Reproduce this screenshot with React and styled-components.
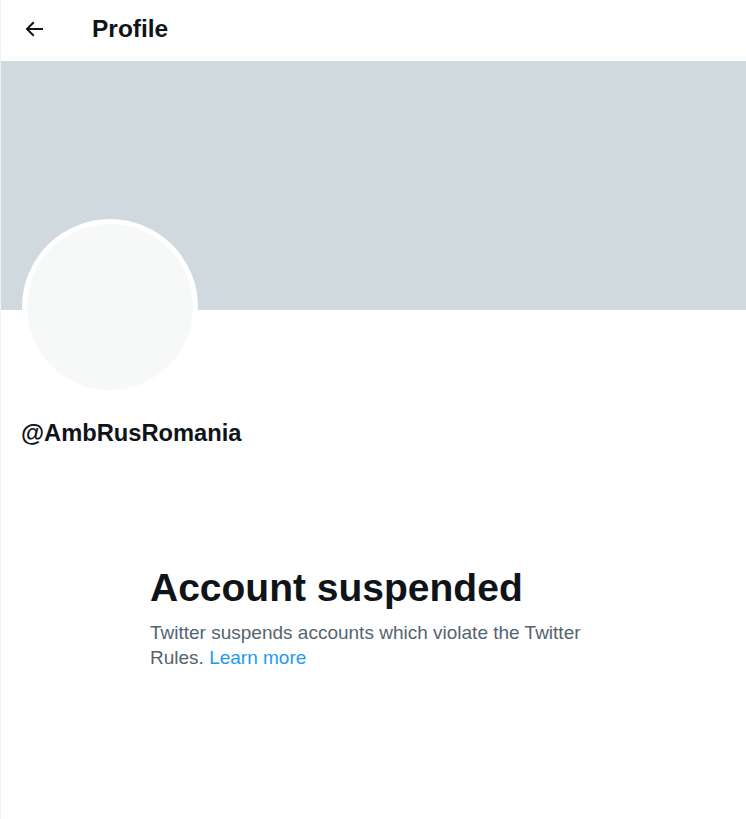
import React from "react";
import styled, { createGlobalStyle } from "styled-components";

const GlobalStyle = createGlobalStyle`
  html, body {
    margin: 0;
    padding: 0;
    background: #ffffff;
  }
  body {
    font-family: "Liberation Sans", Arial, sans-serif;
    color: #0f1419;
  }
  * { box-sizing: border-box; }
`;

const Page = styled.div`
  width: 746px;
  min-height: 100vh;
  border-left: 1px solid #eff3f4;
  display: flex;
  flex-direction: column;
`;

const Header = styled.header`
  height: 61px;
  display: flex;
  align-items: center;
  padding: 0 0 4px 21px;
  gap: 46px;
`;

const BackButton = styled.button`
  width: 24px;
  height: 24px;
  padding: 0;
  border: none;
  background: transparent;
  display: flex;
  align-items: center;
  justify-content: center;
  color: #0f1419;
  cursor: pointer;
`;

const Title = styled.h2`
  margin: 0;
  font-size: 24.5px;
  line-height: 28px;
  font-weight: 700;
  color: #0f1419;
`;

const Banner = styled.div`
  height: 249px;
  background: #cfd9de;
`;

const ProfileSection = styled.section`
  padding: 0 21px;
  display: flex;
  flex-direction: column;
  align-items: flex-start;
`;

const Avatar = styled.div`
  width: 176px;
  height: 176px;
  margin-top: -91px;
  border-radius: 50%;
  border: 5px solid #ffffff;
  background: #f7f9f9;
`;

const Handle = styled.div`
  margin-top: 24px;
  margin-left: -1px;
  font-size: 23.7px;
  line-height: 29px;
  font-weight: 700;
  color: #0f1419;
`;

const Suspended = styled.div`
  width: 447px;
  margin: 117px auto 0;
  display: flex;
  flex-direction: column;
  gap: 9px;
`;

const Heading = styled.h1`
  margin: 0;
  font-size: 39px;
  line-height: 46px;
  font-weight: 700;
  color: #0f1419;
`;

const Message = styled.p`
  margin: 0;
  font-size: 19px;
  line-height: 25px;
  color: #536471;
`;

const Link = styled.a`
  color: #1d9bf0;
  text-decoration: none;
`;

const ArrowIcon = () => (
  <svg viewBox="0 0 24 24" width="24" height="24" aria-hidden="true">
    <path
      fill="currentColor"
      d="M7.414 13l5.043 5.04-1.414 1.42L3.586 12l7.457-7.46 1.414 1.42L7.414 11H21v2H7.414z"
    />
  </svg>
);

export default function App() {
  return (
    <>
      <GlobalStyle />
      <Page>
        <Header>
          <BackButton aria-label="Back">
            <ArrowIcon />
          </BackButton>
          <Title>Profile</Title>
        </Header>
        <Banner />
        <ProfileSection>
          <Avatar />
          <Handle>@AmbRusRomania</Handle>
        </ProfileSection>
        <Suspended>
          <Heading>Account suspended</Heading>
          <Message>
            Twitter suspends accounts which violate the Twitter Rules.{" "}
            <Link href="#">Learn more</Link>
          </Message>
        </Suspended>
      </Page>
    </>
  );
}
